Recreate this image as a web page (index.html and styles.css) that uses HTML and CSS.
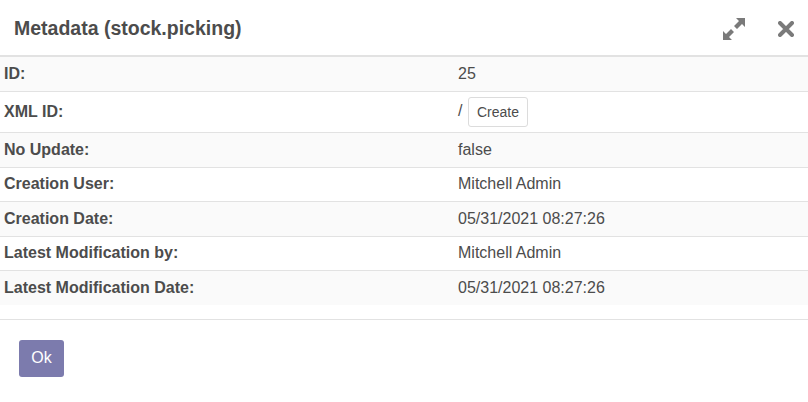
FILE: index.html
```html
<!DOCTYPE html>
<html>
<head>
<meta charset="utf-8">
<link rel="stylesheet" href="styles.css">
</head>
<body>
<div class="dialog">
  <header class="head">
    <h4 class="title">Metadata (stock.picking)</h4>
    <div class="tools">
      <span class="icon expand">
        <svg width="22" height="22" viewBox="0 0 22 22">
          <g fill="#7a7a7a">
            <polygon points="22,0 13,0 16,3 11,8 14,11 19,6 22,9"/>
            <polygon points="0,22 9,22 6,19 11,14 8,11 3,16 0,13"/>
          </g>
        </svg>
      </span>
      <span class="icon close">
        <svg width="16" height="16" viewBox="0 0 16 16">
          <path d="M2 2 L14 14 M14 2 L2 14" stroke="#7a7a7a" stroke-width="4" stroke-linecap="round"/>
        </svg>
      </span>
    </div>
  </header>
  <table class="meta">
    <tr><th>ID:</th><td>25</td></tr>
    <tr class="tall"><th>XML ID:</th><td>/ <button class="create">Create</button></td></tr>
    <tr><th>No Update:</th><td>false</td></tr>
    <tr><th>Creation User:</th><td>Mitchell Admin</td></tr>
    <tr><th>Creation Date:</th><td>05/31/2021 08:27:26</td></tr>
    <tr><th>Latest Modification by:</th><td>Mitchell Admin</td></tr>
    <tr><th>Latest Modification Date:</th><td>05/31/2021 08:27:26</td></tr>
  </table>
  <footer class="foot">
    <button class="ok">Ok</button>
  </footer>
</div>
</body>
</html>
```
FILE: styles.css
```css
html, body {
  margin: 0;
  padding: 0;
  background: #fff;
}
body {
  font-family: "Liberation Sans", Arial, sans-serif;
  color: #4c4c4c;
  font-size: 16px;
}
.dialog {
  width: 808px;
}
.head {
  height: 55px;
  display: flex;
  align-items: center;
  justify-content: space-between;
  border-bottom: 1px solid #e2e2e2;
  padding: 0 14px;
}
.title {
  margin: 0;
  font-size: 19.5px;
  font-weight: bold;
  color: #4c4c4c;
  padding-top: 1px;
}
.tools {
  display: flex;
  align-items: center;
  gap: 33px;
  padding-top: 3px;
}
.icon {
  display: flex;
}
.meta {
  width: 100%;
  border-collapse: collapse;
  border-top: 1px solid #e2e2e2;
}
.meta tr {
  border-top: 1px solid #e2e2e2;
}
.meta tr:first-child {
  border-top: none;
}
.meta tr:nth-child(odd) {
  background: #fafafa;
}
.meta th, .meta td {
  height: 33.5px;
  padding: 0 4px;
  text-align: left;
  vertical-align: middle;
  line-height: 20px;
}
.meta tr:first-child th, .meta tr:first-child td {
  height: 34px;
}
.meta th {
  width: 446px;
  font-weight: bold;
}
.meta td {
  padding-left: 4px;
}
.meta tr.tall th, .meta tr.tall td {
  height: 40px;
}
.create {
  font-family: "Liberation Sans", Arial, sans-serif;
  font-size: 14px;
  color: #4c4c4c;
  background: #fff;
  border: 1px solid #dcdcdc;
  border-radius: 3px;
  padding: 6px 8px;
  margin-left: 1px;
  vertical-align: middle;
}
.foot {
  margin-top: 14px;
  border-top: 1px solid #e2e2e2;
  padding: 20px 19px;
}
.ok {
  width: 45px;
  height: 37px;
  background: #7c7bad;
  color: #fff;
  border: none;
  border-radius: 3px;
  font-family: "Liberation Sans", Arial, sans-serif;
  font-size: 16px;
  padding: 0;
}
```
